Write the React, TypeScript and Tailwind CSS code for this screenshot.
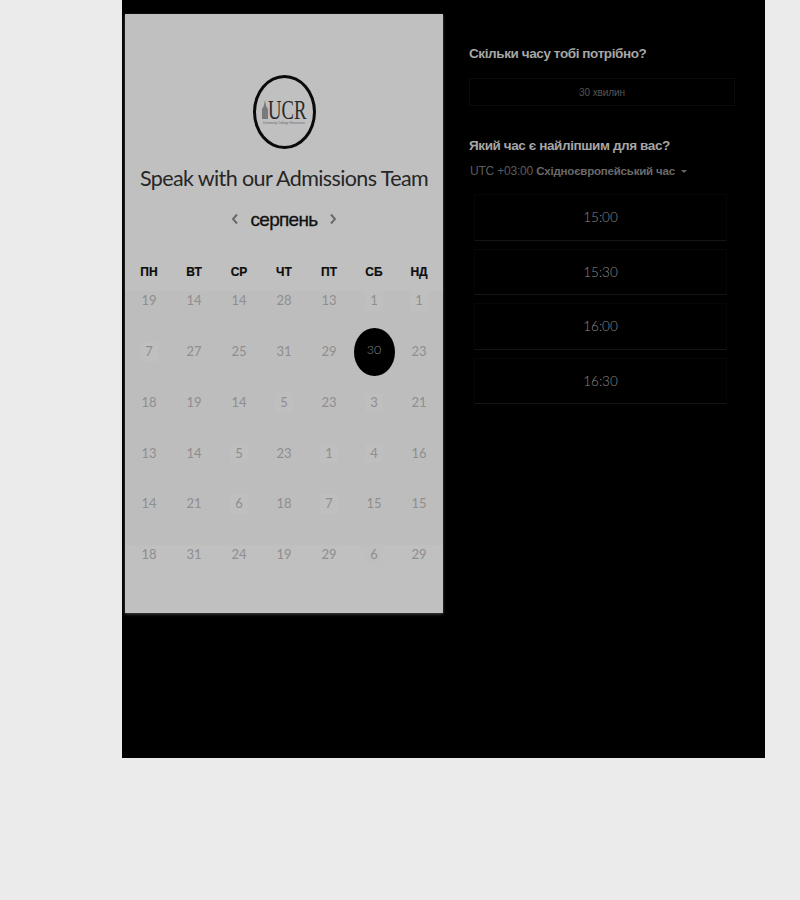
const rows = [
  [19, 14, 14, 28, 13, 1, 1],
  [7, 27, 25, 31, 29, 30, 23],
  [18, 19, 14, 5, 23, 3, 21],
  [13, 14, 5, 23, 1, 4, 16],
  [14, 21, 6, 18, 7, 15, 15],
];
const lastRow = [18, 31, 24, 19, 29, 6, 29];
const days = ["ПН", "ВТ", "СР", "ЧТ", "ПТ", "СБ", "НД"];
const times = ["15:00", "15:30", "16:00", "16:30"];

function Logo() {
  return (
    <div className="relative mx-auto flex h-[74px] w-[63px] items-center justify-center rounded-[50%] border-[3px] border-[#0a0a0a]">
      <div className="flex flex-col items-center">
        <div className="flex items-end">
          <svg width="6" height="19" viewBox="0 0 6 19" className="mb-[1px]">
            <path d="M3 0 L4.2 6 L6 9 V19 H0 V9 L1.8 6 Z" fill="#7a7a7a" />
          </svg>
          <span className="w-[38px] origin-left scale-x-[0.69] font-['Liberation_Serif',serif] text-[27px] leading-[20px] text-[#2a2a2a]">UCR</span>
        </div>
        <span className="mt-[1px] whitespace-nowrap font-['Liberation_Sans',sans-serif] text-[3.2px] leading-[4px] text-[#666]">University College Resources</span>
      </div>
    </div>
  );
}

function Cell({ n }: { n: number }) {
  if (n === 30) {
    return (
      <div className="relative flex h-[20px] items-center justify-center font-['Lato',sans-serif] text-[13px] text-[#8e8e8e]">
        <span className="absolute top-[-14px] left-[2px] flex h-[48px] w-[41px] items-center justify-center rounded-[50%] bg-black text-[12.5px] font-light text-[#8a8a8a]">
          <span className="-mt-[2px]">30</span>
        </span>
      </div>
    );
  }
  return (
    <div className="flex h-[20px] items-center justify-center font-['Lato',sans-serif] text-[13px] text-[#8e8e8e]">
      <span className={n < 10 ? "bg-[#bfbfbf] px-[5px]" : "px-[5px]"}>{n}</span>
    </div>
  );
}

export default function App() {
  return (
    <div className="h-[900px] w-[800px] overflow-hidden bg-[#ebebeb] pl-[122px]">
      <div className="flex h-[758px] w-[643px] bg-black pl-[3px] pt-[14px]">
        <div className="h-[599px] w-[318px] bg-[#c0c0c0] pt-[61px] shadow-[0_1px_3px_rgba(90,90,90,0.8)]">
          <Logo />
          <h1 className="mt-[14px] whitespace-nowrap text-center font-['Lato',sans-serif] text-[21.5px] leading-[30px] tracking-[-0.6px] text-[#262626]">
            Speak with our Admissions Team
          </h1>
          <div className="mt-[12px] flex h-[30px] items-center justify-center">
            <svg width="8" height="12" viewBox="0 0 8 12" className="mr-[11px] mb-[3px]">
              <path d="M6 1.5 L2 6 L6 10.5" fill="none" stroke="#6b6b6b" strokeWidth="2" />
            </svg>
            <span className="w-[68px] whitespace-nowrap text-center font-['Liberation_Sans',sans-serif] text-[19px] leading-[30px] tracking-[-0.7px] text-[#111] [-webkit-text-stroke:0.3px_#111]">серпень</span>
            <svg width="8" height="12" viewBox="0 0 8 12" className="ml-[11px] mb-[3px]">
              <path d="M2 1.5 L6 6 L2 10.5" fill="none" stroke="#6b6b6b" strokeWidth="2" />
            </svg>
          </div>
          <div className="mt-[27px] grid grid-cols-[repeat(7,45px)] pl-[1.5px]">
            {days.map((d) => (
              <div key={d} className="flex h-[20px] items-center justify-center font-['Liberation_Sans',sans-serif] text-[12px] font-bold text-[#0d0d0d] [-webkit-text-stroke:0.2px_#0d0d0d]">
                {d}
              </div>
            ))}
          </div>
          <div className="pt-[9px]">
            <div className="bg-[#bdbdbd]">
              {rows.map((r, i) => (
                <div key={i} className="grid h-[50.8px] grid-cols-[repeat(7,45px)] pl-[1.5px]">
                  {r.map((n, j) => (
                    <Cell key={j} n={n} />
                  ))}
                </div>
              ))}
            </div>
            <div className="grid h-[50px] grid-cols-[repeat(7,45px)] pl-[1.5px]">
              {lastRow.map((n, j) => (
                <Cell key={j} n={n} />
              ))}
            </div>
          </div>
        </div>

        <div className="ml-[26px] w-[266px] pt-[30px]">
          <h2 className="font-['Liberation_Sans',sans-serif] text-[13.5px] font-bold leading-[20px] tracking-[-0.4px] text-[#a6a6a6]">
            Скільки часу тобі потрібно?
          </h2>
          <div className="mt-[14px] flex h-[28px] items-center justify-center border border-[#0c0c0c] pt-[1px] font-['Liberation_Sans',sans-serif] text-[10px] tracking-[-0.1px] text-[#555]">
            30 хвилин
          </div>
          <h2 className="mt-[30px] font-['Liberation_Sans',sans-serif] text-[13.5px] font-bold leading-[20px] tracking-[-0.4px] text-[#a6a6a6]">
            Який час є найліпшим для вас?
          </h2>
          <div className="mt-[4px] flex items-center whitespace-nowrap pt-[1px] font-['Liberation_Sans',sans-serif] text-[12px] leading-[20px] tracking-[-0.2px] text-[#5c5c5c]">
            <span className="ml-[1px]">UTC +03:00&nbsp;</span>
            <span className="text-[11.5px] font-bold text-[#6a6a6a]">Східноєвропейський час</span>
            <span className="ml-[6px] h-0 w-0 border-x-[3px] border-t-[3px] border-x-transparent border-t-[#666]" />
          </div>
          <div className="ml-[5px] mt-[13px] w-[253px]">
            {times.map((t) => (
              <div key={t} className="mt-[8px] flex h-[46.5px] items-center justify-center border border-b-[#151515] border-x-[#070707] border-t-[#070707] font-['Lato',sans-serif] text-[13.5px] font-light text-[#8a8a8a]">
                {t}
              </div>
            ))}
          </div>
        </div>
      </div>
    </div>
  );
}
